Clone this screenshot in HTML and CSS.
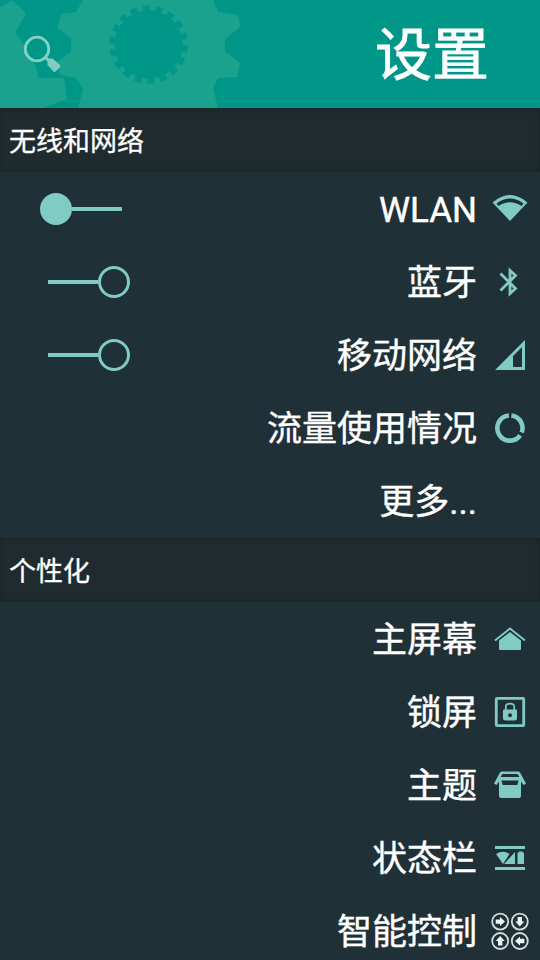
FILE: index.html
```html
<!DOCTYPE html>
<html lang="zh-CN">
<head>
<meta charset="utf-8">
<title>设置</title>
<link rel="stylesheet" href="styles.css">
</head>
<body>
<main class="screen">
  <header class="header">
    <svg class="gears" viewBox="0 0 270 108" aria-hidden="true">
      <g fill="#1aa28f">
        <path d="M0 7L12 0L26 13L15 33L25 46L37 69L38 78L64 78L67 99L43 108H0Z"/>
        <path d="M83 0L76 12L61 14L57 28L71 38V51L57 62L60 75L76 78L83 89L78 108H218L213 88L218 78L237 77L240 63L225 51V39L240 27L238 15L218 12L213 0Z"/>
      </g>
      <circle cx="148.600" cy="44.500" r="34.200" fill="#009688"/>
      <circle cx="148.600" cy="44.500" r="36.200" fill="none" stroke="#009688" stroke-width="6" pathLength="36" stroke-dasharray="1.100 .9" stroke-dashoffset="-.1"/>
    </svg>
    <svg class="search" viewBox="0 0 40 40" aria-label="搜索">
      <circle cx="14" cy="14" r="11.800" fill="none" stroke="#80d2c4" stroke-width="2.800"/>
      <path d="M22 22L26 26" stroke="#80d2c4" stroke-width="3"/>
      <path d="M25.500 23.500L29.500 23.500L37 30Q38 31 37 32L32.500 36.500Q31.500 37.500 30.500 36.500L24.500 30V26.500Z" fill="#80cbc4"/>
    </svg>
    <h1 class="title">设置</h1>
  </header>

  <section>
    <h2 class="section-title">无线和网络</h2>
    <ul class="list">
      <li class="row">
        <span class="switch on"><i class="knob"></i><i class="track"></i></span>
        <span class="label">WLAN</span>
        <svg class="icon" viewBox="0 0 40 40"><path fill-rule="evenodd" d="M2.500 13.500Q20-1.500 37.500 13.500L20 32ZM6.500 14.500L8.500 17Q20 9.500 31.500 17L33.500 14.500Q20 4.500 6.500 14.500Z"/></svg>
      </li>
      <li class="row">
        <span class="switch off"><i class="track"></i><i class="knob"></i></span>
        <span class="label">蓝牙</span>
        <svg class="icon" viewBox="0 0 40 40"><path class="line" stroke-width="2.800" d="M10.500 11.500L25.500 26.500L20 31.500V8.500L25.500 13.500L10.500 28.500"/></svg>
      </li>
      <li class="row">
        <span class="switch off"><i class="track"></i><i class="knob"></i></span>
        <span class="label">移动网络</span>
        <svg class="icon" viewBox="0 0 40 40"><path fill-rule="evenodd" d="M5 35L35 5V35ZM23 21V32H32V12Z"/></svg>
      </li>
      <li class="row">
        <span class="label">流量使用情况</span>
        <svg class="icon" viewBox="0 0 40 40"><path class="line" stroke-width="4.600" d="M18.900 7.500A12.600 12.600 0 1 0 30.200 27.400M31.700 24.500A12.600 12.600 0 0 0 21.400 7.500"/></svg>
      </li>
      <li class="row">
        <span class="label">更多...</span>
        <span class="icon"></span>
      </li>
    </ul>
  </section>

  <section>
    <h2 class="section-title">个性化</h2>
    <ul class="list">
      <li class="row">
        <span class="label">主屏幕</span>
        <svg class="icon" viewBox="0 0 40 40"><path class="line" stroke-width="2" d="M5 21.500L20 9.500L35 21.500"/><path d="M20 13L31 21.500V30Q31 31 30 31H10Q9 31 9 30V21.500Z"/></svg>
      </li>
      <li class="row">
        <span class="label">锁屏</span>
        <svg class="icon" viewBox="0 0 40 40"><rect class="line" x="6.300" y="6.300" width="27.400" height="27.400" rx="1" stroke-width="2.800"/><path class="line" stroke-width="1.700" d="M15.800 19V14.500Q15.800 11.700 20 11.700T24.200 14.500V19"/><path fill-rule="evenodd" d="M14 17.500H26Q27 17.500 27 18.500V26Q27 28.500 24.500 28.500H15.500Q13 28.500 13 26V18.500Q13 17.500 14 17.500ZM20 21.200A2 2 0 1 0 20 25.200A2 2 0 1 0 20 21.200Z"/></svg>
      </li>
      <li class="row">
        <span class="label">主题</span>
        <svg class="icon" viewBox="0 0 40 40"><path fill-rule="evenodd" d="M12 6.500H28Q29.500 6.500 30 7.500L36 18.500L33.500 20L31 16.500V31Q31 33 29 33H11Q9 33 9 31V16.500L6.500 20L4 18.500L10 7.500Q10.500 6.500 12 6.500ZM12.500 9L10.500 12H29.500L27.500 9ZM11.500 15.500L12.500 19.500Q12.700 20 13.500 20H26.500Q27.300 20 27.500 19.500L28.500 15.500Z"/></svg>
      </li>
      <li class="row">
        <span class="label">状态栏</span>
        <svg class="icon" viewBox="0 0 40 40"><path d="M5 8H35V11H5ZM5 29H35V32H5ZM6 16Q13 11.500 19.500 16L13 26ZM14 26L25 14V26ZM27.500 15Q27.500 14.500 28 14.500H29V13.500H32.500V14.500H33.500Q34 14.500 34 15V26H27.500Z"/></svg>
      </li>
      <li class="row">
        <span class="label">智能控制</span>
        <svg class="icon control" viewBox="0 0 40 40">
          <g class="rings"><circle cx="10.200" cy="10.600" r="8"/><circle cx="29.800" cy="10.600" r="8"/><circle cx="10.200" cy="30" r="8"/><circle cx="29.800" cy="30" r="8"/></g>
          <path d="M5.700 8.400H10V6.100L15 10.600L10 15.100V12.800H5.700Z"/>
          <path d="M27.600 6.100H32V10.400H34.300L29.800 15.400L25.300 10.400H27.600Z"/>
          <path d="M8 34.500H12.400V30H14.700L10.200 25L5.700 30H8Z"/>
          <path d="M34.300 27.800H30V25.500L25 30L30 34.500V32.200H34.300Z"/>
        </svg>
      </li>
    </ul>
  </section>
</main>
</body>
</html>
```

FILE: styles.css
```css
* {
  box-sizing: border-box;
}

body {
  margin: 0;
  background: #203037;
  color: #fff;
  font-family: Roboto, "Noto Sans CJK SC", sans-serif;
  overflow: hidden;
}

.screen {
  width: 540px;
  height: 960px;
  overflow: hidden;
}

.header {
  position: relative;
  display: flex;
  align-items: center;
  justify-content: space-between;
  height: 108px;
  padding: 0 51px 0 23px;
  background: #009688;
}

.gears {
  position: absolute;
  left: 0;
  top: 0;
  width: 270px;
  height: 108px;
}

.search {
  position: relative;
  width: 40px;
  height: 40px;
  margin-top: 2px;
}

.title {
  margin: 0;
  padding-top: 3px;
  font-size: 57px;
  font-weight: 400;
  line-height: 108px;
  -webkit-text-stroke: 0.8px #fff;
}

.section-title {
  height: 64px;
  margin: 0;
  padding: 2px 0 0 9px;
  background: #202b2f;
  box-shadow: inset 0 0 5px 1px #1a2525;
  font-size: 27px;
  font-weight: 400;
  line-height: 64px;
  -webkit-text-stroke: 0.3px #fff;
}

.list {
  margin: 0;
  padding: 0 10px 1px 0;
  list-style: none;
}

.row {
  display: flex;
  align-items: center;
  justify-content: flex-end;
  height: 73px;
}

.label {
  margin-right: 13px;
  padding-top: 3px;
  font-size: 35px;
  line-height: 73px;
  white-space: nowrap;
  -webkit-text-stroke: 0.4px #fff;
}

.icon {
  flex: none;
  width: 40px;
  height: 40px;
  fill: #80cbc4;
}

.line {
  fill: none;
  stroke: #80cbc4;
}

.control {
  fill: #eef3f3;
}

.rings {
  fill: none;
  stroke: #d5dddd;
  stroke-width: 1.8;
}

.switch {
  display: flex;
  align-items: center;
  margin-right: auto;
}

.switch.on {
  margin-left: 40px;
}

.switch.off {
  margin-left: 48px;
}

.track {
  width: 50px;
  height: 4px;
  background: #80cbc4;
}

.knob {
  width: 32px;
  height: 32px;
  border: 3px solid #80cbc4;
  border-radius: 50%;
}

.on .knob {
  background: #80cbc4;
}
```
